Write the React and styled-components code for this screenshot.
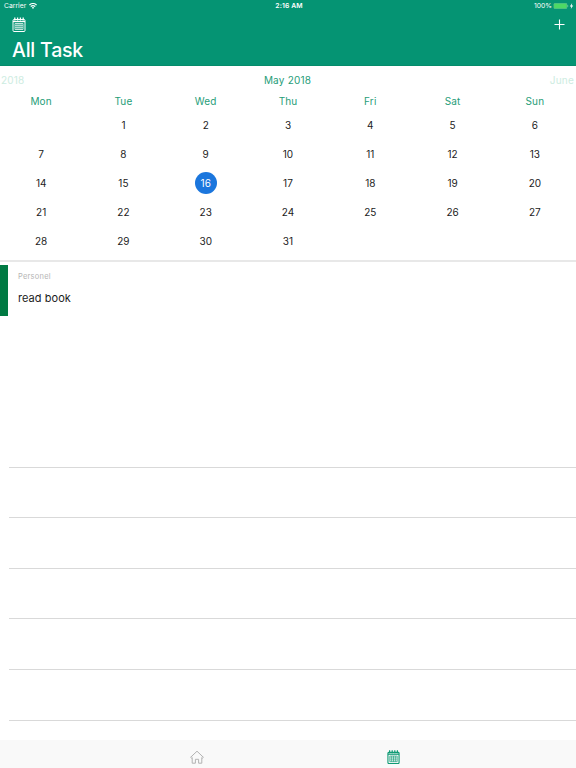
import React from "react";
import styled, { createGlobalStyle } from "styled-components";

const GlobalStyle = createGlobalStyle`
  * { box-sizing: border-box; }
  body { margin: 0; background: #fff; font-family: Inter, "Liberation Sans", sans-serif; color: #222; }
  svg { display: block; }
`;

const Screen = styled.div`
  display: flex;
  flex-direction: column;
  width: 576px;
  height: 768px;
  overflow: hidden;
  background: #fff;
`;

const Header = styled.header`
  height: 66px;
  flex: none;
  background: #059473;
  color: #fff;
  border-bottom: 1px solid #048c6b;
`;

const StatusBar = styled.div`
  display: grid;
  grid-template-columns: 1fr auto 1fr;
  align-items: center;
  height: 12px;
  padding: 0 2px 0 4px;
  font-size: 6.8px;
  line-height: 12px;
`;

const StatusGroup = styled.div`
  display: flex;
  align-items: center;
  gap: ${(p) => p.$gap}px;
  justify-content: ${(p) => (p.$end ? "flex-end" : "flex-start")};
`;

const Clock = styled.span`
  font-weight: 600;
  font-size: 6.8px;
  letter-spacing: 0.1px;
`;

const NavBar = styled.div`
  display: flex;
  align-items: center;
  justify-content: space-between;
  height: 24px;
  padding: 0 11px 0 12px;
`;

const Title = styled.h1`
  margin: 0 0 0 12px;
  font-size: 19.5px;
  line-height: 28px;
  font-weight: 500;
  letter-spacing: -0.2px;
`;

const Calendar = styled.section`
  flex: none;
  height: 196px;
  border-bottom: 2px solid #e8e8e8;
  overflow: hidden;
`;

const MonthStrip = styled.div`
  display: grid;
  grid-template-columns: 1fr auto 1fr;
  height: 27px;
  padding: 0 2px 0 1px;
  line-height: 28px;
  font-size: 10px;
  letter-spacing: 0.2px;
`;

const Month = styled.span`
  text-align: ${(p) => p.$align};
  color: ${(p) => (p.$faded ? "#cdece1" : "#1f9d78")};
`;

const Week = styled.div`
  display: grid;
  grid-template-columns: repeat(7, 1fr);
  height: ${(p) => (p.$heading ? 17 : 29)}px;
  align-items: center;
  justify-items: center;
`;

const Weekday = styled.span`
  font-size: 10px;
  line-height: 14px;
  letter-spacing: 0.15px;
  color: #1f9d78;
  margin-top: -2px;
`;

const Day = styled.span`
  display: flex;
  align-items: center;
  justify-content: center;
  width: 22px;
  height: 22px;
  margin-top: 1px;
  border-radius: 50%;
  font-size: 10px;
  background: ${(p) => (p.$selected ? "#1b76dd" : "transparent")};
  color: ${(p) => (p.$selected ? "#fff" : "#222")};
`;

const TaskList = styled.main`
  flex: 1;
  display: flex;
  flex-direction: column;
  padding-top: 3px;
  min-height: 0;
`;

const Task = styled.article`
  height: 51px;
  flex: none;
  border-left: 8px solid #007a43;
  padding: 6px 0 0 10px;
`;

const Category = styled.div`
  font-size: 7.5px;
  line-height: 12px;
  letter-spacing: 0.22px;
  color: #b5b5b5;
`;

const TaskName = styled.div`
  margin-top: 7px;
  font-size: 11px;
  line-height: 16px;
  letter-spacing: 0.05px;
  color: #1c1c1c;
`;

const EmptyRows = styled.div`
  margin: 101px 0 0 9px;
`;

const EmptyRow = styled.div`
  height: 50.6px;
  border-bottom: 1px solid #d9d9d9;
`;

const TabBar = styled.nav`
  flex: none;
  display: grid;
  grid-template-columns: 1fr 1fr;
  height: 28px;
  background: #f9f9f9;
  padding: 10px 85px 0 92px;
`;

const Tab = styled.div`
  display: flex;
  justify-content: center;
  align-items: flex-start;
  padding-left: ${(p) => p.$shift || 0}px;
  color: ${(p) => (p.$active ? "#109b75" : "#b3b3b3")};
`;

const CalendarIcon = ({ width, height, weight = 1 }) => (
  <svg width={width} height={height} viewBox="0 0 14 15" preserveAspectRatio="none" fill="none" stroke="currentColor" strokeWidth={weight}>
    <rect x="1" y="2.5" width="12" height="12" rx="1" />
    <path d="M1 4.5H13" strokeWidth="1.3" />
    <path d="M2.8 .4V3.5M5.6 .4V3.5M8.4 .4V3.5M11.2 .4V3.5" strokeWidth="1.3" />
    <path d="M3 6.5H11V12.5H3ZM5 6.5V12.5M7 6.5V12.5M9 6.5V12.5" strokeWidth=".7" />
    <path d="M3 8.5H11M3 10.5H11" strokeWidth=".5" />
  </svg>
);

const weeks = [
  ["", 1, 2, 3, 4, 5, 6],
  [7, 8, 9, 10, 11, 12, 13],
  [14, 15, 16, 17, 18, 19, 20],
  [21, 22, 23, 24, 25, 26, 27],
  [28, 29, 30, 31, "", "", ""],
];

export default function App() {
  return (
    <Screen>
      <GlobalStyle />
      <Header>
        <StatusBar>
          <StatusGroup $gap={3}>
            <span>Carrier</span>
            <svg width="8" height="6" viewBox="0 0 8 6" fill="none" stroke="#fff">
              <path d="M.4 2Q4-1 7.6 2M1.7 3.5Q4 1.7 6.3 3.5" strokeWidth="1.15" />
              <path d="M2.8 4.5Q4 3.6 5.2 4.5L4 5.9Z" fill="#fff" stroke="none" />
            </svg>
          </StatusGroup>
          <Clock>2:16 AM</Clock>
          <StatusGroup $gap={1} $end>
            <span>100%</span>
            <svg width="21" height="6" viewBox="0 0 21 6">
              <rect x=".9" y=".3" width="13" height="5.4" rx="1" fill="#4cd964" stroke="#5cbd94" strokeWidth=".6" />
              <path d="M14.7 2V4" stroke="#5cbd94" />
              <path d="M19.2 0L16.8 3.4H18.3L17.8 6L20.2 2.5H18.7Z" fill="#fff" />
            </svg>
          </StatusGroup>
        </StatusBar>
        <NavBar>
          <CalendarIcon width={14} height={15} />
          <svg width="11" height="11" viewBox="0 0 11 11" stroke="#fff" strokeWidth="1.1">
            <path d="M5.5 .5V10.5M.5 5.5H10.5" />
          </svg>
        </NavBar>
        <Title>All Task</Title>
      </Header>
      <Calendar>
        <MonthStrip>
          <Month $faded $align="left">2018</Month>
          <Month $align="center">May 2018</Month>
          <Month $faded $align="right">June</Month>
        </MonthStrip>
        <Week $heading>
          {["Mon", "Tue", "Wed", "Thu", "Fri", "Sat", "Sun"].map((d) => (
            <Weekday key={d}>{d}</Weekday>
          ))}
        </Week>
        {weeks.map((week, w) => (
          <Week key={w}>
            {week.map((day, i) => (
              <Day key={i} $selected={day === 16}>{day}</Day>
            ))}
          </Week>
        ))}
      </Calendar>
      <TaskList>
        <Task>
          <Category>Personel</Category>
          <TaskName>read book</TaskName>
        </Task>
        <EmptyRows>
          {[0, 1, 2, 3, 4, 5].map((row) => (
            <EmptyRow key={row} />
          ))}
        </EmptyRows>
      </TaskList>
      <TabBar>
        <Tab $shift={10}>
          <svg width="14" height="14" viewBox="0 0 14 14" fill="none" stroke="currentColor" strokeWidth="1" strokeLinejoin="round">
            <path d="M.6 7.3L7 1.2L13.4 7.3L12.5 8.1L11.8 7.5V13.2H8.6V9.3H5.4V13.2H2.2V7.5L1.5 8.1Z" />
          </svg>
        </Tab>
        <Tab $active $shift={4}>
          <CalendarIcon width={13} height={14} weight={1.2} />
        </Tab>
      </TabBar>
    </Screen>
  );
}
